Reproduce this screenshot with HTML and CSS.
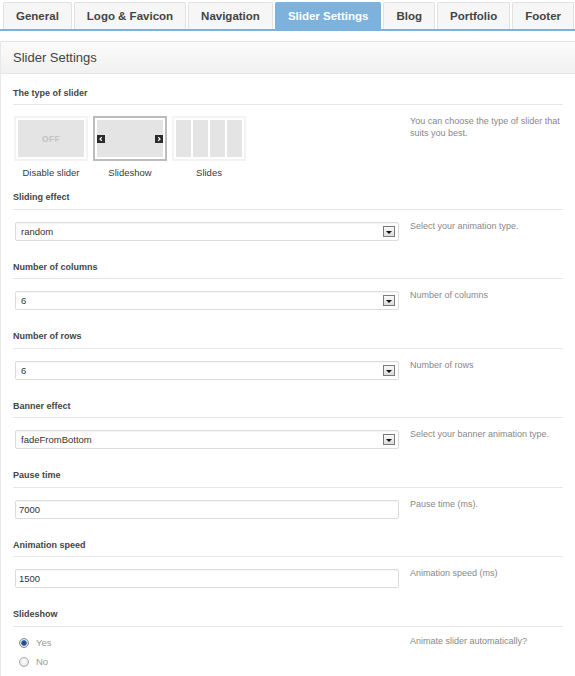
FILE: index.html
```html
<!DOCTYPE html>
<html>
<head>
<meta charset="utf-8">
<title>Slider Settings</title>
<link rel="stylesheet" href="styles.css">
</head>
<body>
<nav class="tabs">
  <div class="tab">General</div>
  <div class="tab">Logo &amp; Favicon</div>
  <div class="tab">Navigation</div>
  <div class="tab active">Slider Settings</div>
  <div class="tab">Blog</div>
  <div class="tab">Portfolio</div>
  <div class="tab">Footer</div>
</nav>

<section class="panel">
  <header class="panel-head">Slider Settings</header>
  <div class="panel-body">

    <div class="section first">
      <div class="label">The type of slider</div>
      <div class="row types-row">
        <div class="types">
          <div class="type">
            <div class="thumb"><div class="inner off">OFF</div></div>
            <div class="type-name">Disable slider</div>
          </div>
          <div class="type">
            <div class="thumb selected">
              <div class="inner show">
                <span class="arrow"><svg width="8" height="8" viewBox="0 0 8 8"><polyline points="4.8,2.2 3,4 4.8,5.8" fill="none" stroke="#fff" stroke-width="1.2"/></svg></span>
                <span class="arrow"><svg width="8" height="8" viewBox="0 0 8 8"><polyline points="3.2,2.2 5,4 3.2,5.8" fill="none" stroke="#fff" stroke-width="1.2"/></svg></span>
              </div>
            </div>
            <div class="type-name">Slideshow</div>
          </div>
          <div class="type">
            <div class="thumb"><div class="inner cols"><span></span><span></span><span></span><span></span></div></div>
            <div class="type-name">Slides</div>
          </div>
        </div>
        <div class="desc up1">You can choose the type of slider that<br>suits you best.</div>
      </div>
    </div>

    <div class="section">
      <div class="label">Sliding effect</div>
      <div class="row">
        <div class="field select"><span>random</span><i class="drop"></i></div>
        <div class="desc">Select your animation type.</div>
      </div>
    </div>

    <div class="section">
      <div class="label">Number of columns</div>
      <div class="row">
        <div class="field select"><span>6</span><i class="drop"></i></div>
        <div class="desc">Number of columns</div>
      </div>
    </div>

    <div class="section">
      <div class="label">Number of rows</div>
      <div class="row">
        <div class="field select"><span>6</span><i class="drop"></i></div>
        <div class="desc">Number of rows</div>
      </div>
    </div>

    <div class="section">
      <div class="label">Banner effect</div>
      <div class="row">
        <div class="field select"><span>fadeFromBottom</span><i class="drop"></i></div>
        <div class="desc">Select your banner animation type.</div>
      </div>
    </div>

    <div class="section">
      <div class="label">Pause time</div>
      <div class="row">
        <div class="field input">7000</div>
        <div class="desc">Pause time (ms).</div>
      </div>
    </div>

    <div class="section">
      <div class="label">Animation speed</div>
      <div class="row">
        <div class="field input">1500</div>
        <div class="desc">Animation speed (ms)</div>
      </div>
    </div>

    <div class="section last">
      <div class="label">Slideshow</div>
      <div class="row radio-row">
        <div class="radios">
          <div class="radio-item"><span class="radio checked"></span>Yes</div>
          <div class="radio-item"><span class="radio"></span>No</div>
        </div>
        <div class="desc">Animate slider automatically?</div>
      </div>
    </div>

  </div>
</section>
</body>
</html>
```
FILE: styles.css
```css
html, body {
  margin: 0;
  overflow: hidden;
}
body {
  width: 575px;
  height: 676px;
  background: #fff;
  color: #444;
  font-family: "Liberation Sans", Arial, sans-serif;
  display: flex;
  flex-direction: column;
}

/* tabs */
.tabs {
  display: flex;
  align-items: flex-end;
  gap: 2px;
  height: 27px;
  padding: 2px 0 0 3px;
  border-bottom: 2px solid #7db2dc;
  white-space: nowrap;
  flex-shrink: 0;
}
.tab {
  flex-shrink: 0;
  height: 26px;
  line-height: 26px;
  padding: 0 12px;
  border: 1px solid #e2e2e2;
  border-bottom: 0;
  border-radius: 2px 2px 0 0;
  background: #f6f6f6;
  color: #444;
  font-size: 11.5px;
  font-weight: bold;
}
.tab.active {
  background: #7db2dc;
  border-color: #7db2dc;
  color: #fff;
}

/* panel */
.panel {
  flex: 1;
  margin-top: 10px;
  border-left: 1px solid #e8e8e8;
  overflow: hidden;
}
.panel-head {
  height: 31px;
  line-height: 31px;
  padding-left: 12px;
  border-top: 1px solid #e4e4e4;
  border-bottom: 1px solid #e4e4e4;
  background: linear-gradient(#fbfbfb, #f1f1f1);
  font-size: 13px;
  color: #444;
}
.panel-body {
  padding: 13px 12px 0 12px;
}

.section {
  margin-bottom: 20px;
}
.section.first {
  margin-bottom: 12px;
}
.section.last {
  margin-bottom: 0;
}
.label {
  font-size: 9px;
  font-weight: bold;
  color: #454545;
  line-height: 12px;
  padding-bottom: 5.5px;
  border-bottom: 1px solid #e6e6e6;
}
.section.first .label {
  padding-bottom: 5px;
}
.row {
  display: grid;
  grid-template-columns: 384px 1fr;
  column-gap: 11px;
  padding-left: 2px;
  margin-top: 12px;
  align-items: start;
}
.types-row {
  margin-top: 11px;
  padding-left: 1px;
  grid-template-columns: 385px 1fr;
}
.desc {
  font-size: 9px;
  line-height: 12px;
  color: #888;
  margin-top: -2px;
}
.desc.up1 {
  margin-top: -1px;
}

/* slider types */
.types {
  display: flex;
  gap: 5px;
}
.type {
  display: flex;
  flex-direction: column;
  align-items: center;
}
.thumb {
  width: 66px;
  height: 37px;
  padding: 2px;
  border: 2px solid #f3f3f3;
  background: #fff;
}
.thumb.selected {
  border-color: #bcbcbc;
}
.inner {
  height: 37px;
  background: #e4e4e4;
}
.inner.off {
  display: flex;
  align-items: center;
  justify-content: center;
  color: #c3c3c3;
  font-size: 8.5px;
  font-weight: bold;
  letter-spacing: 0.3px;
}
.inner.show {
  display: flex;
  align-items: center;
  justify-content: space-between;
}
.arrow {
  width: 8px;
  height: 8px;
  background: #2b2b2b;
  display: block;
}
.arrow svg {
  display: block;
}
.inner.cols {
  background: #fff;
  display: grid;
  grid-template-columns: repeat(4, 1fr);
  gap: 2px;
}
.inner.cols span {
  background: #e4e4e4;
}
.type-name {
  margin-top: 6px;
  font-size: 9.5px;
  line-height: 12px;
  color: #3a3a3a;
}

/* fields */
.field {
  box-sizing: border-box;
  height: 19px;
  border: 1px solid #dcdcdc;
  border-radius: 2px;
  background: #fff;
  box-shadow: inset 0 1px 1px rgba(0,0,0,0.04);
  font-size: 9.5px;
  line-height: 17px;
  color: #333;
}
.select {
  display: flex;
  align-items: center;
  justify-content: space-between;
  padding: 0 3px 0 5px;
}
.input {
  padding-left: 3px;
}
.drop {
  box-sizing: border-box;
  width: 12px;
  height: 11px;
  border: 1px solid #7a7a7a;
  background: linear-gradient(#fafafa, #dcdcdc);
  display: flex;
  align-items: center;
  justify-content: center;
  padding-top: 2px;
}
.drop::after {
  content: "";
  border-left: 3px solid transparent;
  border-right: 3px solid transparent;
  border-top: 3px solid #111;
}

/* radios */
.radio-row {
  margin-top: 10px;
}
.radios {
  display: flex;
  flex-direction: column;
  gap: 7px;
  padding-left: 4px;
}
.radio-item {
  display: flex;
  align-items: center;
  gap: 7px;
  font-size: 9.5px;
  line-height: 12px;
  color: #999;
}
.radio {
  box-sizing: border-box;
  width: 10px;
  height: 10px;
  border-radius: 50%;
  border: 1px solid #a8a8a8;
  background: radial-gradient(circle at 50% 40%, #ffffff, #dcdcdc);
}
.radio.checked {
  border-color: #8a8a8a;
  background: radial-gradient(circle, #1d4f91 0 2px, #5d86bb 2.6px, #e6e6e6 3.2px, #d6d6d6);
}
```
